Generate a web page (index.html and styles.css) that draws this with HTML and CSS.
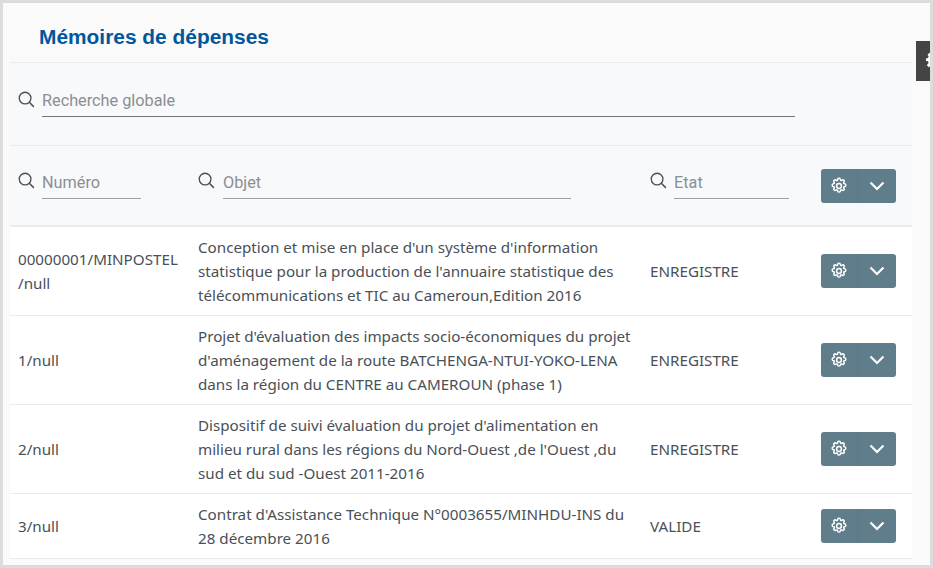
FILE: index.html
```html
<!DOCTYPE html>
<html lang="fr">
<head>
<meta charset="utf-8">
<title>Mémoires de dépenses</title>
<link rel="stylesheet" href="styles.css">
</head>
<body>
<svg class="defs" width="0" height="0" aria-hidden="true">
  <symbol id="search" viewBox="0 0 18 18">
    <circle cx="7.5" cy="7.5" r="6.2" fill="none" stroke="currentColor" stroke-width="1.4"/>
    <path d="M12 12l4.8 4.8" fill="none" stroke="currentColor" stroke-width="1.6"/>
  </symbol>
  <symbol id="gear" viewBox="0 0 24 24">
    <circle cx="12" cy="12" r="3.200" fill="none" stroke="currentColor" stroke-width="2"/>
    <path fill="none" stroke="currentColor" stroke-width="2" stroke-linejoin="round" d="M10.300 2.800c.4-1.300 3-1.300 3.400 0l.3 1.100c.2.700 1 1 1.600.7l1-.6c1.200-.7 3 1.100 2.300 2.300l-.6 1c-.3.600 0 1.400.7 1.600l1.100.3c1.300.4 1.300 3 0 3.400l-1.100.3c-.7.2-1 1-.7 1.600l.6 1c.7 1.200-1.100 3-2.300 2.300l-1-.6c-.6-.3-1.400 0-1.600.7l-.3 1.100c-.4 1.300-3 1.300-3.400 0l-.3-1.100c-.2-.7-1-1-1.600-.7l-1 .6c-1.200.7-3-1.100-2.300-2.300l.6-1c.3-.6 0-1.400-.7-1.600l-1.100-.3c-1.300-.4-1.300-3 0-3.400l1.100-.3c.7-.2 1-1 .7-1.600l-.6-1c-.7-1.200 1.100-3 2.300-2.300l1 .6c.6.3 1.400 0 1.600-.7z"/>
  </symbol>
  <symbol id="gear-solid" viewBox="0 0 24 24">
    <path fill="currentColor" fill-rule="evenodd" d="M10 1h4l.6 3 2.200 1 2.600-1.700 2.800 2.800L20 8.700l1 2.300 3 .6v3.800l-3 .6-1 2.300 1.700 2.600-2.800 1.800-2.500-1.600-2.400 1-.5 2.900h-4l-.6-3-2.200-1-2.600 1.700-2.800-2.800L4 16.300 3 14l-3-.6V9.600l3-.6 1-2.300L2.300 4.100l2.800-2.800L7.600 3 10 4zM12 8.500a3.500 3.500 0 1 0 0 7 3.500 3.500 0 0 0 0-7z"/>
  </symbol>
  <symbol id="chevron" viewBox="0 0 16 10">
    <path d="M1.500 1.500L8 8l6.500-6.500" fill="none" stroke="currentColor" stroke-width="2.200"/>
  </symbol>
</svg>
<main class="frame">
  <div class="side-tab"><svg class="side-icon"><use href="#gear-solid"/></svg></div>
  <div class="panel">
    <h1 class="title">Mémoires de dépenses</h1>
    <section class="global-filter">
      <svg class="search-icon"><use href="#search"/></svg>
      <div class="field field-global">Recherche globale</div>
    </section>
    <section class="row filter-row">
      <div class="cell filter-cell"><svg class="search-icon"><use href="#search"/></svg><div class="field field-num">Numéro</div></div>
      <div class="cell filter-cell"><svg class="search-icon icon-wide"><use href="#search"/></svg><div class="field field-obj">Objet</div></div>
      <div class="cell filter-cell"><svg class="search-icon"><use href="#search"/></svg><div class="field field-etat">Etat</div></div>
      <div class="cell"><div class="btn-group btn-group-filter"><button class="btn btn-gear"><svg class="gear"><use href="#gear"/></svg></button><button class="btn btn-chev"><svg class="chev"><use href="#chevron"/></svg></button></div></div>
    </section>
    <section class="row">
      <div class="cell">00000001/MINPOSTEL<br>/null</div>
      <div class="cell">Conception et mise en place d'un système d'information statistique pour la production de l'annuaire statistique des télécommunications et TIC au Cameroun,Edition 2016</div>
      <div class="cell">ENREGISTRE</div>
      <div class="cell"><div class="btn-group"><button class="btn btn-gear"><svg class="gear"><use href="#gear"/></svg></button><button class="btn btn-chev"><svg class="chev"><use href="#chevron"/></svg></button></div></div>
    </section>
    <section class="row">
      <div class="cell">1/null</div>
      <div class="cell">Projet d'évaluation des impacts socio-économiques du projet d'aménagement de la route BATCHENGA-NTUI-YOKO-LENA dans la région du CENTRE au CAMEROUN (phase 1)</div>
      <div class="cell">ENREGISTRE</div>
      <div class="cell"><div class="btn-group"><button class="btn btn-gear"><svg class="gear"><use href="#gear"/></svg></button><button class="btn btn-chev"><svg class="chev"><use href="#chevron"/></svg></button></div></div>
    </section>
    <section class="row">
      <div class="cell">2/null</div>
      <div class="cell">Dispositif de suivi évaluation du projet d'alimentation en milieu rural dans les régions du Nord-Ouest ,de l'Ouest ,du sud et du sud -Ouest 2011-2016</div>
      <div class="cell">ENREGISTRE</div>
      <div class="cell"><div class="btn-group"><button class="btn btn-gear"><svg class="gear"><use href="#gear"/></svg></button><button class="btn btn-chev"><svg class="chev"><use href="#chevron"/></svg></button></div></div>
    </section>
    <section class="row">
      <div class="cell">3/null</div>
      <div class="cell">Contrat d'Assistance Technique N°0003655/MINHDU-INS du 28 décembre 2016</div>
      <div class="cell">VALIDE</div>
      <div class="cell"><div class="btn-group"><button class="btn btn-gear"><svg class="gear"><use href="#gear"/></svg></button><button class="btn btn-chev"><svg class="chev"><use href="#chevron"/></svg></button></div></div>
    </section>
  </div>
</main>
</body>
</html>
```
FILE: styles.css
```css
* { box-sizing: border-box; }
html, body { margin: 0; height: 100%; }
body {
  width: 933px;
  height: 568px;
  overflow: hidden;
  background: #dcdcdc;
  padding: 3px;
  font-family: "Noto Sans", "Open Sans", sans-serif;
  font-size: 15.2px;
  line-height: 24px;
  color: #495057;
}
.defs { position: absolute; }
.frame {
  position: relative;
  width: 927px;
  height: 562px;
  background: #fafafa;
  overflow: hidden;
  padding: 0 18px 0 7px;
}
.side-tab {
  position: absolute;
  left: 913px;
  top: 38px;
  width: 14px;
  height: 40px;
  background: #444;
  overflow: hidden;
}
.side-icon {
  width: 16px;
  height: 16px;
  margin: 11px 0 0 10px;
  color: #fff;
}
.panel { background: #fff; }
.title {
  margin: 0;
  height: 60px;
  background: #fafafa;
  padding: 22px 0 0 29px;
  font-family: "Liberation Sans", Arial, sans-serif;
  font-size: 20.9px;
  line-height: 24px;
  font-weight: 700;
  color: #01579b;
  border-bottom: 1px solid #e9ecef;
}
.global-filter {
  height: 83px;
  background: #f8f9fa;
  padding: 25px 8px 0;
  border-bottom: 1px solid #e9ecef;
  display: flex;
  align-items: flex-start;
}
.search-icon {
  flex: none;
  width: 17px;
  height: 17px;
  margin: 3px 7px 0 0;
  color: #495057;
}
.icon-wide { margin-right: 8px; }
.field {
  height: 29px;
  padding-top: 1px;
  border-bottom: 1px solid #9e9e9e;
  font-family: Roboto, sans-serif;
  font-size: 16.25px;
  line-height: 24px;
  color: #8a8f94;
}
.field-global { width: 753px; border-bottom-color: #757575; }
.field-num { width: 99px; }
.field-obj { width: 348px; }
.field-etat { width: 115px; }
.row {
  display: grid;
  grid-template-columns: 180px 452px 171px 99px;
  height: 89px;
  background: #fff;
  border-bottom: 1px solid #e9ecef;
}
.row:last-child { height: 65px; }
.cell {
  padding: 8px;
  align-self: center;
}
.filter-row {
  height: 81px;
  background: #f8f9fa;
  border-bottom-width: 2px;
}
.filter-cell {
  display: flex;
  align-items: flex-start;
  padding-top: 0;
  padding-bottom: 0;
  margin-top: -2px;
}
.filter-cell .search-icon { margin-top: 2px; }
.btn-group { display: flex; width: 75px; height: 34px; margin-top: -1px; }
.btn-group-filter { margin-top: 0; }
.btn {
  border: 0;
  padding: 0;
  height: 34px;
  color: #fff;
  background: #607d8b;
  display: flex;
  align-items: center;
  justify-content: center;
}
.btn-gear { width: 37px; border-radius: 3px 0 0 3px; border-right: 1px solid #5c7886; }
.btn-chev { width: 38px; border-radius: 0 3px 3px 0; }
.gear { width: 18px; height: 18px; }
.chev { width: 16px; height: 10px; }
```
